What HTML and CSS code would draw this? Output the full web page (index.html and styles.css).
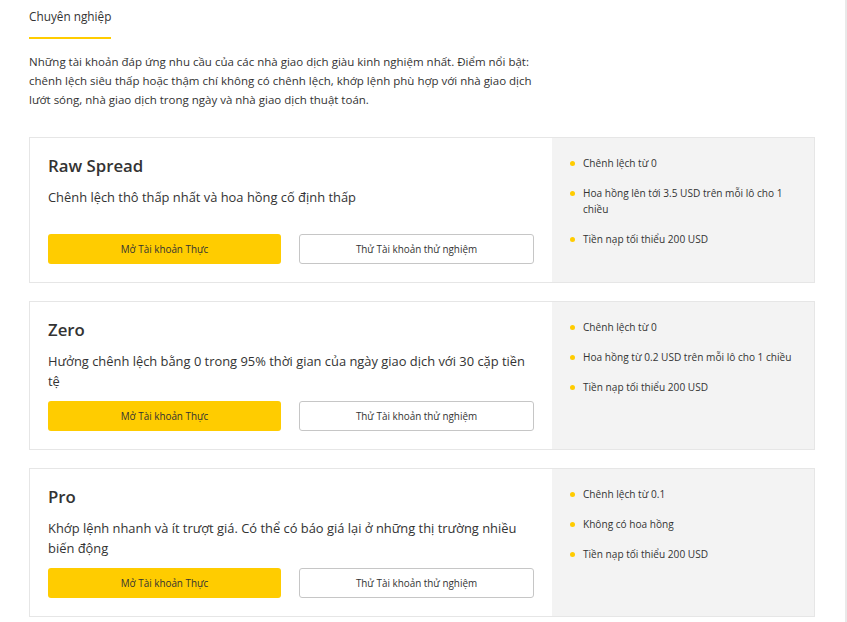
FILE: index.html
```html
<!DOCTYPE html>
<html lang="vi">
<head>
<meta charset="utf-8">
<title>Chuyên nghiệp</title>
<link rel="stylesheet" href="styles.css">
</head>
<body>
<div class="page">
  <div class="tabs">
    <div class="tab active">Chuyên nghiệp</div>
  </div>
  <p class="intro">Những tài khoản đáp ứng nhu cầu của các nhà giao dịch giàu kinh nghiệm nhất. Điểm nổi bật: chênh lệch siêu thấp hoặc thậm chí không có chênh lệch, khớp lệnh phù hợp với nhà giao dịch lướt sóng, nhà giao dịch trong ngày và nhà giao dịch thuật toán.</p>

  <div class="cards">
    <div class="card">
      <div class="card-main">
        <h2 class="card-title">Raw Spread</h2>
        <p class="card-desc">Chênh lệch thô thấp nhất và hoa hồng cố định thấp</p>
        <div class="actions">
          <a class="btn btn-primary">Mở Tài khoản Thực</a>
          <a class="btn btn-outline">Thử Tài khoản thử nghiệm</a>
        </div>
      </div>
      <ul class="card-features">
        <li>Chênh lệch từ 0</li>
        <li>Hoa hồng lên tới 3.5 USD trên mỗi lô cho 1 chiều</li>
        <li>Tiền nạp tối thiểu 200 USD</li>
      </ul>
    </div>

    <div class="card">
      <div class="card-main">
        <h2 class="card-title">Zero</h2>
        <p class="card-desc">Hưởng chênh lệch bằng 0 trong 95% thời gian của ngày giao dịch với 30 cặp tiền tệ</p>
        <div class="actions">
          <a class="btn btn-primary">Mở Tài khoản Thực</a>
          <a class="btn btn-outline">Thử Tài khoản thử nghiệm</a>
        </div>
      </div>
      <ul class="card-features">
        <li>Chênh lệch từ 0</li>
        <li>Hoa hồng từ 0.2 USD trên mỗi lô cho 1 chiều</li>
        <li>Tiền nạp tối thiểu 200 USD</li>
      </ul>
    </div>

    <div class="card">
      <div class="card-main">
        <h2 class="card-title">Pro</h2>
        <p class="card-desc">Khớp lệnh nhanh và ít trượt giá. Có thể có báo giá lại ở những thị trường nhiều biến động</p>
        <div class="actions">
          <a class="btn btn-primary">Mở Tài khoản Thực</a>
          <a class="btn btn-outline">Thử Tài khoản thử nghiệm</a>
        </div>
      </div>
      <ul class="card-features">
        <li>Chênh lệch từ 0.1</li>
        <li>Không có hoa hồng</li>
        <li>Tiền nạp tối thiểu 200 USD</li>
      </ul>
    </div>
  </div>
</div>
</body>
</html>
```
FILE: styles.css
```css
html, body {
  margin: 0;
  padding: 0;
  background: #fff;
}
body {
  font-family: "Open Sans", "Noto Sans", sans-serif;
  color: #333;
}
.page {
  box-sizing: border-box;
  min-height: 622px;
  padding: 0 30px 0 29px;
  border-right: 2px solid #e9e9e9;
}
.tabs {
  display: flex;
  padding-top: 7px;
}
.tab {
  font-size: 11.8px;
  line-height: 18px;
  padding-bottom: 12px;
  width: 82px;
  border-bottom: 2px solid #ffcc00;
  white-space: nowrap;
}
.intro {
  margin: 13px 0 0;
  max-width: 506px;
  font-size: 11.5px;
  line-height: 19px;
}
.cards {
  margin-top: 28px;
  display: flex;
  flex-direction: column;
  gap: 18px;
  width: 786px;
}
.card {
  display: flex;
  border: 1px solid #e6e6e6;
  background: #fff;
}
.card-main {
  flex: 1;
  padding: 16px 18px 18px;
}
.card-title {
  margin: 0;
  font-size: 16.8px;
  line-height: 24px;
  font-weight: 600;
  color: #333;
}
.card-desc {
  margin: 9px 0 0;
  font-size: 12.9px;
  line-height: 20px;
  min-height: 37px;
}
.actions {
  margin-top: 10px;
  display: flex;
  gap: 18px;
}
.btn {
  flex: 1;
  box-sizing: border-box;
  height: 30px;
  display: flex;
  align-items: center;
  justify-content: center;
  font-size: 9.9px;
  color: #333;
  border-radius: 3px;
  text-decoration: none;
}
.btn-primary {
  background: #ffcc00;
}
.btn-outline {
  background: #fff;
  border: 1px solid #c6c6c6;
}
.card-features {
  width: 262px;
  box-sizing: border-box;
  margin: 0;
  padding: 17px 12px 16px 18px;
  list-style: none;
  background: #f3f3f3;
  display: flex;
  flex-direction: column;
  gap: 14px;
}
.card-features li {
  display: flex;
  align-items: flex-start;
  gap: 8px;
  font-size: 10.1px;
  line-height: 16px;
}
.card-features li::before {
  content: "";
  flex: none;
  width: 5px;
  height: 5px;
  margin-top: 5.5px;
  border-radius: 50%;
  background: #ffcc00;
}
```
